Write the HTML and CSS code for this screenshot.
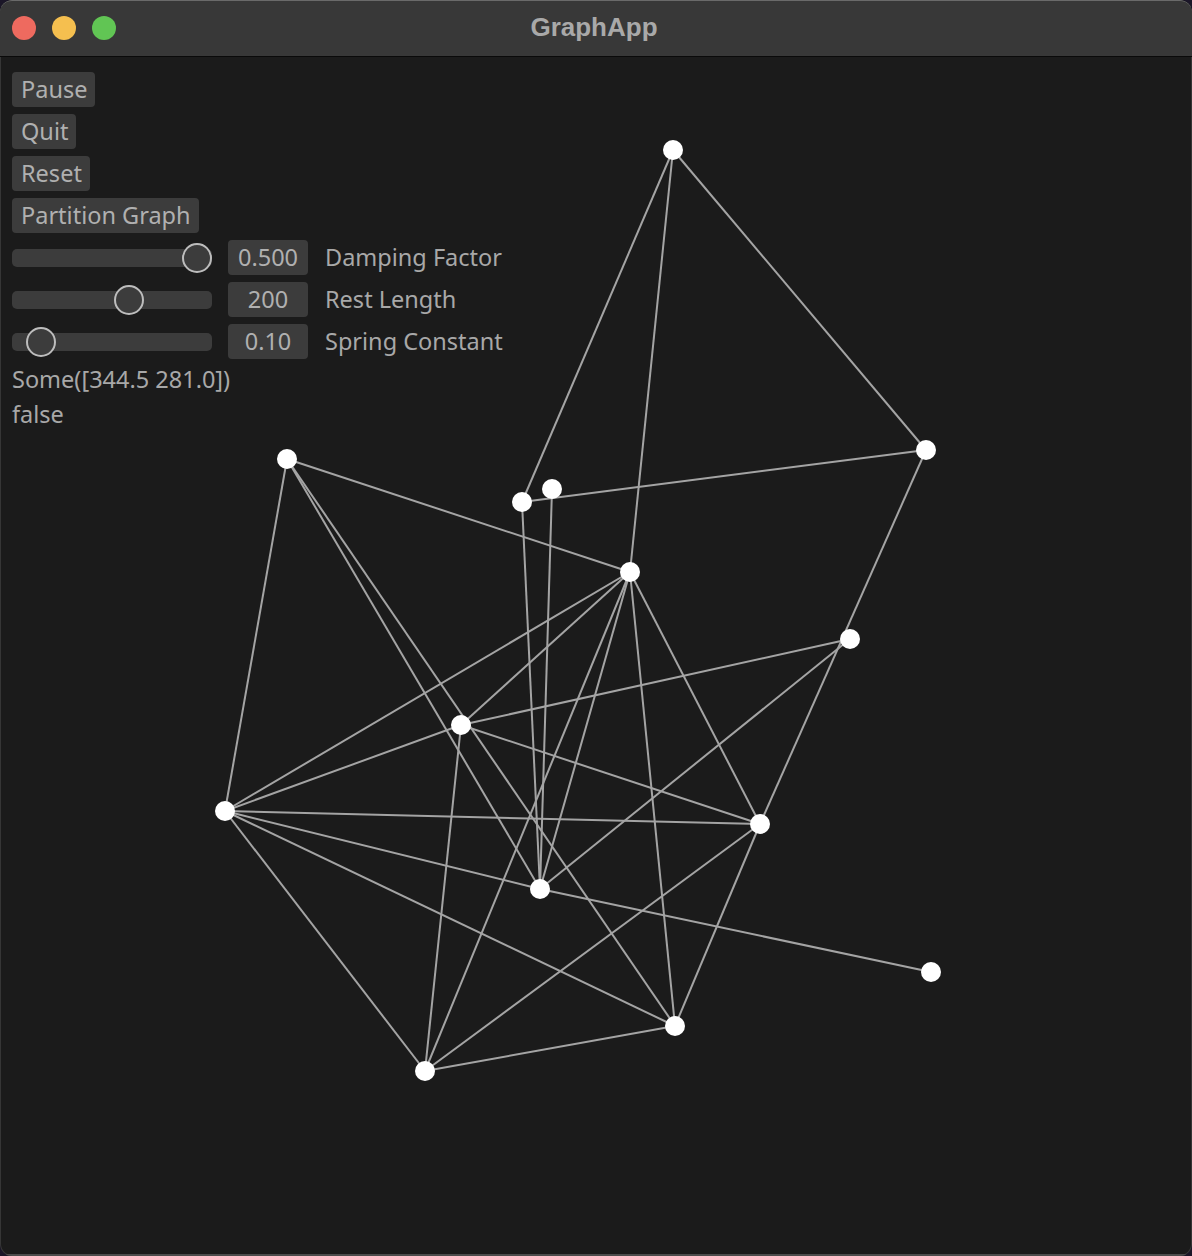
FILE: index.html
```html
<!DOCTYPE html>
<html>
<head>
<meta charset="utf-8">
<title>GraphApp</title>
<link rel="stylesheet" href="styles.css">
</head>
<body>
<div class="window">
  <header class="titlebar">
    <div class="lights">
      <span class="light red"></span>
      <span class="light yellow"></span>
      <span class="light green"></span>
    </div>
    <div class="title">GraphApp</div>
  </header>
  <main class="canvas">
    <svg class="graph" viewBox="0 57 1192 1199" width="1192" height="1199" xmlns="http://www.w3.org/2000/svg">
      <g class="edges">
        <line x1="673" y1="150" x2="522" y2="502"/>
        <line x1="673" y1="150" x2="630" y2="572"/>
        <line x1="673" y1="150" x2="926" y2="450"/>
        <line x1="522" y1="502" x2="926" y2="450"/>
        <line x1="522" y1="502" x2="540" y2="889"/>
        <line x1="552" y1="489" x2="540" y2="889"/>
        <line x1="287" y1="459" x2="630" y2="572"/>
        <line x1="287" y1="459" x2="225" y2="811"/>
        <line x1="287" y1="459" x2="540" y2="889"/>
        <line x1="287" y1="459" x2="675" y2="1026"/>
        <line x1="630" y1="572" x2="461" y2="725"/>
        <line x1="630" y1="572" x2="225" y2="811"/>
        <line x1="630" y1="572" x2="540" y2="889"/>
        <line x1="630" y1="572" x2="425" y2="1071"/>
        <line x1="630" y1="572" x2="675" y2="1026"/>
        <line x1="630" y1="572" x2="760" y2="824"/>
        <line x1="850" y1="639" x2="461" y2="725"/>
        <line x1="850" y1="639" x2="540" y2="889"/>
        <line x1="926" y1="450" x2="760" y2="824"/>
        <line x1="461" y1="725" x2="225" y2="811"/>
        <line x1="461" y1="725" x2="760" y2="824"/>
        <line x1="461" y1="725" x2="425" y2="1071"/>
        <line x1="225" y1="811" x2="760" y2="824"/>
        <line x1="225" y1="811" x2="540" y2="889"/>
        <line x1="225" y1="811" x2="675" y2="1026"/>
        <line x1="225" y1="811" x2="425" y2="1071"/>
        <line x1="760" y1="824" x2="425" y2="1071"/>
        <line x1="760" y1="824" x2="675" y2="1026"/>
        <line x1="540" y1="889" x2="931" y2="972"/>
        <line x1="675" y1="1026" x2="425" y2="1071"/>
      </g>
      <g class="nodes">
        <circle cx="673" cy="150" r="10"/>
        <circle cx="926" cy="450" r="10"/>
        <circle cx="287" cy="459" r="10"/>
        <circle cx="522" cy="502" r="10"/>
        <circle cx="552" cy="489" r="10"/>
        <circle cx="630" cy="572" r="10"/>
        <circle cx="850" cy="639" r="10"/>
        <circle cx="461" cy="725" r="10"/>
        <circle cx="225" cy="811" r="10"/>
        <circle cx="760" cy="824" r="10"/>
        <circle cx="540" cy="889" r="10"/>
        <circle cx="931" cy="972" r="10"/>
        <circle cx="675" cy="1026" r="10"/>
        <circle cx="425" cy="1071" r="10"/>
      </g>
    </svg>
    <section class="panel">
      <button class="btn">Pause</button>
      <button class="btn">Quit</button>
      <button class="btn">Reset</button>
      <button class="btn">Partition Graph</button>
      <div class="slider-row">
        <div class="track"><span class="knob" style="left:170px"></span></div>
        <div class="value">0.500</div>
        <div class="label">Damping Factor</div>
      </div>
      <div class="slider-row">
        <div class="track"><span class="knob" style="left:102px"></span></div>
        <div class="value">200</div>
        <div class="label">Rest Length</div>
      </div>
      <div class="slider-row">
        <div class="track"><span class="knob" style="left:14px"></span></div>
        <div class="value">0.10</div>
        <div class="label">Spring Constant</div>
      </div>
      <div class="text-line first">Some([344.5 281.0])</div>
      <div class="text-line">false</div>
    </section>
  </main>
</div>
</body>
</html>
```

FILE: styles.css
```css
* {
  box-sizing: border-box;
}

html, body {
  margin: 0;
  padding: 0;
  background: #1b1628;
}

.window {
  width: 1192px;
  height: 1256px;
  border-radius: 12px;
  overflow: hidden;
  background: #1b1b1b;
  display: flex;
  flex-direction: column;
  position: relative;
  box-shadow: inset 0 0 0 1px rgba(255, 255, 255, 0.12);
}

.titlebar {
  height: 57px;
  flex: 0 0 57px;
  background: #383838;
  border-top: 1px solid #6a6a6a;
  border-bottom: 1px solid #0a0a0a;
  display: flex;
  align-items: center;
  position: relative;
  border-radius: 12px 12px 0 0;
}

.lights {
  display: flex;
  gap: 16px;
  padding-left: 12px;
  margin-top: -1px;
}

.light {
  width: 24px;
  height: 24px;
  border-radius: 50%;
  display: block;
}

.red { background: #ee6a5f; }
.yellow { background: #f5bf4f; }
.green { background: #61c554; }

.title {
  position: absolute;
  left: 0;
  right: 0;
  top: 0;
  bottom: 0;
  display: flex;
  align-items: center;
  justify-content: center;
  font-family: "Liberation Sans", Arial, sans-serif;
  font-weight: bold;
  font-size: 26px;
  color: #a9a9a9;
  padding-right: 4px;
  margin-top: -2px;
}

.canvas {
  flex: 1;
  position: relative;
  border-bottom: 2px solid #4c4c4c;
}

.graph {
  position: absolute;
  left: 0;
  top: 0;
  display: block;
}

.edges line {
  stroke: #a4a4a4;
  stroke-width: 2;
}

.nodes circle {
  fill: #ffffff;
}

.panel {
  position: relative;
  padding: 15px 12px 0;
  display: flex;
  flex-direction: column;
  align-items: flex-start;
  gap: 7px;
  font-family: "Noto Sans", "Open Sans", sans-serif;
  font-size: 23.5px;
  color: #a8a8a8;
}

.btn {
  height: 35px;
  line-height: 35px;
  padding: 0 8px 0 9px;
  background: #3c3c3c;
  border: none;
  border-radius: 4px;
  font-family: inherit;
  font-size: inherit;
  color: #b0b0b0;
  margin: 0;
}

.slider-row {
  height: 35px;
  display: flex;
  align-items: center;
  gap: 16px;
}

.track {
  width: 200px;
  height: 18px;
  background: #3c3c3c;
  border-radius: 5px;
  position: relative;
}

.knob {
  position: absolute;
  top: -6px;
  width: 30px;
  height: 30px;
  border-radius: 50%;
  background: #3c3c3c;
  border: 2px solid #bdbdbd;
}

.value {
  width: 80px;
  height: 35px;
  line-height: 35px;
  text-align: center;
  background: #3c3c3c;
  border-radius: 4px;
  color: #b0b0b0;
}

.label {
  line-height: 35px;
  padding-left: 1px;
}

.text-line {
  line-height: 28px;
}

.text-line.first {
  margin-top: -1px;
}
```
